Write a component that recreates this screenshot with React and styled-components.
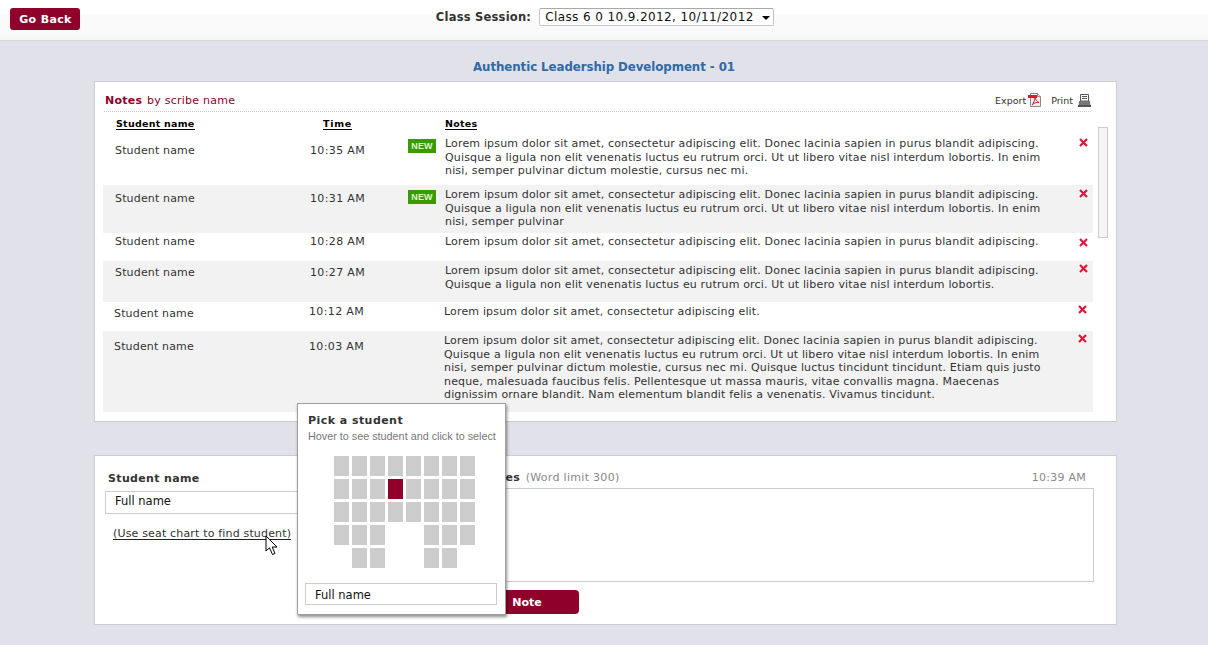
import React from "react";
import styled, { createGlobalStyle } from "styled-components";

const Global = createGlobalStyle`
  html, body { margin: 0; padding: 0; background: #e1e1ea; }
  body { font-family: "DejaVu Sans", Verdana, sans-serif; font-size: 11px; letter-spacing: 0.16px; color: #333; }
  * { box-sizing: border-box; }
`;
const maroon = "#8f002b";

const Page = styled.div`
  position: relative;
  width: 1208px;
  height: 645px;
  overflow: hidden;
  background: #e1e1ea;
`;
const TopBar = styled.header`
  display: grid;
  grid-template-columns: 1fr auto 1fr;
  align-items: start;
  height: 41px;
  padding: 8px 8px 0 10px;
  background: linear-gradient(#ffffff 0, #ffffff 14px, #fafafa 15px, #fafafa 33px, #f6f6f6 100%);
  border-bottom: 1px solid #d8d8d8;
`;
const BackButton = styled.button`
  justify-self: start;
  width: 70px;
  height: 22px;
  padding: 0 0 0 1px;
  border: 0;
  border-radius: 3px;
  background: ${maroon};
  color: #fff;
  font: bold 11px "DejaVu Sans", sans-serif;
  letter-spacing: 0.35px;
`;
const SessionGroup = styled.div`
  display: flex;
  align-items: center;
  gap: 8px;
  height: 18px;
`;
const SessionLabel = styled.label`
  font-weight: bold;
  font-size: 11.5px;
  letter-spacing: 0.22px;
  color: #333;
`;
const SessionSelect = styled.div`
  position: relative;
  width: 235px;
  height: 18px;
  padding-left: 5px;
  line-height: 17px;
  background: #fff;
  border: 1px solid #c4c4cc;
  border-top-color: #a9a9a9;
  border-radius: 2px;
  color: #111;
  font-size: 12px;
  letter-spacing: 0.4px;
  white-space: nowrap;
  &::after {
    content: "";
    position: absolute;
    right: 3px;
    top: 7px;
    border: 4px solid transparent;
    border-top-color: #000;
    border-bottom: 0;
  }
`;
const Title = styled.h1`
  margin: 19px 0 0;
  height: 21px;
  font-size: 11.8px;
  line-height: 15px;
  font-weight: bold;
  text-align: center;
  color: #2f6aa5;
  letter-spacing: -0.07px;
`;
const Panel = styled.section`
  width: 1023px;
  margin-left: 94px;
  background: #fff;
  border: 1px solid #cbcbd2;
`;
const NotesPanel = styled(Panel)`
  height: 341px;
  padding: 0 8px;
`;
const PanelHead = styled.div`
  display: flex;
  justify-content: space-between;
  align-items: flex-end;
  height: 30px;
  margin: 0 -4px 0 1px;
  width: 987px;
  padding: 0 0 4px 1px;
  border-bottom: 1px dotted #c9c9c9;
`;
const PanelTitle = styled.div`
  color: ${maroon};
  line-height: 13px;
  letter-spacing: 0.25px;
  b { margin-right: 1px; }
`;
const Tools = styled.div`
  display: flex;
  align-items: center;
  gap: 10px;
  font-size: 9.5px;
  letter-spacing: 0;
  color: #333;
`;
const Tool = styled.span`
  display: inline-flex;
  align-items: center;
  gap: ${(p) => p.$gap}px;
`;
const Body = styled.div`
  display: flex;
  align-items: flex-start;
  gap: 5px;
`;
const List = styled.div`
  width: 990px;
`;
const Scrollbar = styled.div`
  width: 14px;
  height: 111px;
  margin-top: 15px;
  background: #f5f5f5;
  border: 1px solid #cccccc;
`;
const Grid = styled.div`
  display: grid;
  grid-template-columns: 195px 98px 37px 633px 15px;
  padding-left: 12px;
`;
const HeadRow = styled(Grid)`
  height: 22px;
  padding-top: 5px;
  font-size: 9.5px;
  font-weight: bold;
  color: #000;
`;
const HeadCell = styled.span`
  justify-self: start;
  margin-left: ${(p) => p.$left || 0}px;
  line-height: 13px;
  letter-spacing: ${(p) => p.$ls || 0.25}px;
  border-bottom: 1px solid #000;
  height: 13px;
`;
const Row = styled(Grid)`
  height: ${(p) => p.$h}px;
  padding-top: ${(p) => p.$top}px;
  padding-left: ${(p) => 12 - p.$shift}px;
  background: ${(p) => (p.$alt ? "#f2f2f2" : "#fff")};
`;
const Cell = styled.div`
  line-height: 13.5px;
  padding-top: ${(p) => p.$top || 0}px;
  white-space: nowrap;
`;
const TimeCell = styled(Cell)`
  letter-spacing: 0.36px;
`;
const NoteText = styled.div`
  line-height: 13.5px;
  color: #333;
  white-space: pre-line;
`;
const Badge = styled.span`
  display: block;
  width: 28px;
  height: 14px;
  margin-top: 2px;
  background: #3a9a00;
  color: #dff5cf;
  font: bold 9px/14px "Liberation Sans", sans-serif;
  letter-spacing: 0.2px;
  text-align: center;
`;
const Remove = styled.span`
  display: block;
  margin: ${(p) => p.$top}px 0 0 1px;
  line-height: 0;
`;
const EntryPanel = styled(Panel)`
  display: flex;
  height: 170px;
  margin-top: 33px;
  padding: 15px 22px 0 10px;
`;
const LeftCol = styled.div`
  width: 335px;
`;
const RightCol = styled.div`
  flex: 1;
`;
const FieldLabel = styled.div`
  padding: 1px 0 0 3px;
  height: 20px;
  line-height: 14px;
  font-weight: bold;
  letter-spacing: 0.35px;
  color: #333;
`;
const TextField = styled.div`
  height: ${(p) => p.$h || 23}px;
  padding-left: 9px;
  line-height: ${(p) => p.$lh || 18}px;
  background: #fff;
  border: 1px solid #cccccc;
  font-size: 11.5px;
  letter-spacing: 0;
  color: #111;
`;
const SeatLink = styled.a`
  display: inline-block;
  margin: 14px 0 0 8px;
  line-height: 12px;
  height: 12px;
  color: #333;
  border-bottom: 1px solid #222;
  letter-spacing: 0.17px;
`;
const NotesHead = styled.div`
  display: flex;
  justify-content: space-between;
  height: 17px;
  padding: 0 8px 0 43px;
  line-height: 14px;
  strong { color: #333; letter-spacing: 0.2px; margin-right: 2px; }
  em { font-style: normal; color: #888; letter-spacing: 0.3px; }
`;
const Clock = styled.span`
  color: #888;
  letter-spacing: 0.25px;
`;
const NoteArea = styled.div`
  height: 94px;
  background: #fff;
  border: 1px solid #cccccc;
`;
const SaveButton = styled.button`
  display: block;
  width: 139px;
  height: 24px;
  margin-top: 8px;
  padding: 0 0 0 2px;
  border: 0;
  border-radius: 4px;
  background: ${maroon};
  color: #fff;
  font: bold 11px "DejaVu Sans", sans-serif;
  letter-spacing: 0;
  word-spacing: 5px;
`;
const Popover = styled.aside`
  position: absolute;
  left: 297px;
  top: 403px;
  width: 209px;
  height: 212px;
  padding: 10px 8px 0 7px;
  background: #fff;
  border: 1px solid #a0a0a0;
  box-shadow: 1px 2px 3px rgba(0, 0, 0, 0.45);
`;
const PopTitle = styled.div`
  padding-left: 3px;
  font-weight: bold;
  line-height: 13px;
  letter-spacing: 0.45px;
  color: #333;
`;
const PopHint = styled.div`
  padding-left: 3px;
  margin-top: 2px;
  font: 10.8px/14px "Liberation Sans", sans-serif;
  letter-spacing: 0;
  color: #777;
  white-space: nowrap;
`;
const SeatGrid = styled.div`
  display: grid;
  grid-template-columns: repeat(8, 15px);
  grid-auto-rows: 20px;
  gap: 3px;
  margin: 13px 0 15px 29px;
`;
const Seat = styled.span`
  background: ${(p) => (p.$on ? maroon : p.$gap ? "transparent" : "#cccccc")};
`;
const CursorMark = styled.svg`
  position: absolute;
  left: 265px;
  top: 535px;
`;

const L1 = "Lorem ipsum dolor sit amet, consectetur adipiscing elit. Donec lacinia sapien in purus blandit adipiscing.";
const L2 = "Quisque a ligula non elit venenatis luctus eu rutrum orci. Ut ut libero vitae nisl interdum lobortis. In enim";
const rows = [
  { h: 51, top: 3, off: 7, t: "10:35 AM", isNew: true, x: 1, text: `${L1}\n${L2}\nnisi, semper pulvinar dictum molestie, cursus nec mi.` },
  { h: 48, top: 3, off: 4, t: "10:31 AM", isNew: true, x: 1, alt: true, text: `${L1}\n${L2}\nnisi, semper pulvinar` },
  { h: 28, top: 2, off: 0, t: "10:28 AM", x: 3, text: L1 },
  { h: 41, top: 3, off: 2, t: "10:27 AM", x: 0, alt: true, text: `${L1}\n${L2.replace(" In enim", "")}` },
  { h: 29, top: 3, off: 2, tOff: 0, shift: 1, t: "10:12 AM", x: 0, text: "Lorem ipsum dolor sit amet, consectetur adipiscing elit." },
  { h: 81, top: 3, off: 6, shift: 1, t: "10:03 AM", x: 0, alt: true, text: `${L1}\n${L2}\nnisi, semper pulvinar dictum molestie, cursus nec mi. Quisque luctus tincidunt tincidunt. Etiam quis justo\nneque, malesuada faucibus felis. Pellentesque ut massa mauris, vitae convallis magna. Maecenas\ndignissim ornare blandit. Nam elementum blandit felis a venenatis. Vivamus tincidunt.` },
];
const seatRows = ["11111111", "11121111", "11111111", "11100111", "01100110"];

const CrossIcon = () => (
  <svg width="9" height="9" viewBox="0 0 9 9">
    <path d="M1 1 L8 8 M8 1 L1 8" stroke="#e0173a" strokeWidth="2.2" />
  </svg>
);
const PdfIcon = () => (
  <svg width="13" height="14" viewBox="0 0 13 14">
    <path d="M2.500 .5H9.500L12.500 3.500V13.500H2.500Z" fill="#f4f0f0" stroke="#8a8a8a" />
    <path d="M9.500 .5V3.500H12.500" fill="#ddd" stroke="#8a8a8a" />
    <rect x="0" y="2" width="9" height="3" fill="#e8112d" />
    <path d="M7 5C6.500 8 5.500 10 4 12C6 10 8.500 9 11 9.500C9 8.500 7.800 7 7.300 5" fill="none" stroke="#e8112d" />
  </svg>
);
const PrintIcon = () => (
  <svg width="13" height="13" viewBox="0 0 13 13">
    <path d="M2.500 .5H10.500V7H2.500Z" fill="#fff" stroke="#555" />
    <path d="M4 2.500H9M4 4.500H9" stroke="#555" />
    <path d="M1 7H12L12.500 12H.5Z" fill="#777" />
    <rect x="0" y="11" width="13" height="2" fill="#555" />
  </svg>
);

export default function App() {
  return (
    <Page>
      <Global />
      <TopBar>
        <BackButton>Go Back</BackButton>
        <SessionGroup>
          <SessionLabel>Class Session:</SessionLabel>
          <SessionSelect>Class 6 0 10.9.2012, 10/11/2012</SessionSelect>
        </SessionGroup>
        <span />
      </TopBar>
      <Title>Authentic Leadership Development - 01</Title>
      <NotesPanel>
        <PanelHead>
          <PanelTitle>
            <b>Notes</b> by scribe name
          </PanelTitle>
          <Tools>
            <Tool $gap={2}>
              Export <PdfIcon />
            </Tool>
            <Tool $gap={5}>
              Print <PrintIcon />
            </Tool>
          </Tools>
        </PanelHead>
        <Body>
          <List>
            <HeadRow>
              <HeadCell $left={1}>Student name</HeadCell>
              <HeadCell $left={13} $ls={0.7}>Time</HeadCell>
              <span />
              <HeadCell>Notes</HeadCell>
              <span />
            </HeadRow>
            {rows.map((r) => (
              <Row key={r.t} $h={r.h} $top={r.top} $alt={r.alt} $shift={r.shift || 0}>
                <Cell $top={r.off}>Student name</Cell>
                <TimeCell $top={r.tOff ?? r.off}>{r.t}</TimeCell>
                <div>{r.isNew && <Badge>NEW</Badge>}</div>
                <NoteText>{r.text}</NoteText>
                <Remove $top={r.x}>
                  <CrossIcon />
                </Remove>
              </Row>
            ))}
          </List>
          <Scrollbar />
        </Body>
      </NotesPanel>
      <EntryPanel>
        <LeftCol>
          <FieldLabel>Student name</FieldLabel>
          <TextField>Full name</TextField>
          <SeatLink>(Use seat chart to find student)</SeatLink>
        </LeftCol>
        <RightCol>
          <NotesHead>
            <span>
              <strong>Notes</strong> <em>(Word limit 300)</em>
            </span>
            <Clock>10:39 AM</Clock>
          </NotesHead>
          <NoteArea />
          <SaveButton>Add Note</SaveButton>
        </RightCol>
      </EntryPanel>
      <Popover>
        <PopTitle>Pick a student</PopTitle>
        <PopHint>Hover to see student and click to select</PopHint>
        <SeatGrid>
          {seatRows.flatMap((row, i) =>
            row.split("").map((c, j) => <Seat key={`${i}-${j}`} $gap={c === "0"} $on={c === "2"} />)
          )}
        </SeatGrid>
        <TextField $h={22} $lh={22}>Full name</TextField>
      </Popover>
      <CursorMark width="14" height="22" viewBox="0 0 14 22">
        <path d="M1 1V16L4.500 12.800L7.500 19.500L10 18.500L7.200 12H12Z" fill="#fff" stroke="#000" strokeWidth="1" />
      </CursorMark>
    </Page>
  );
}
